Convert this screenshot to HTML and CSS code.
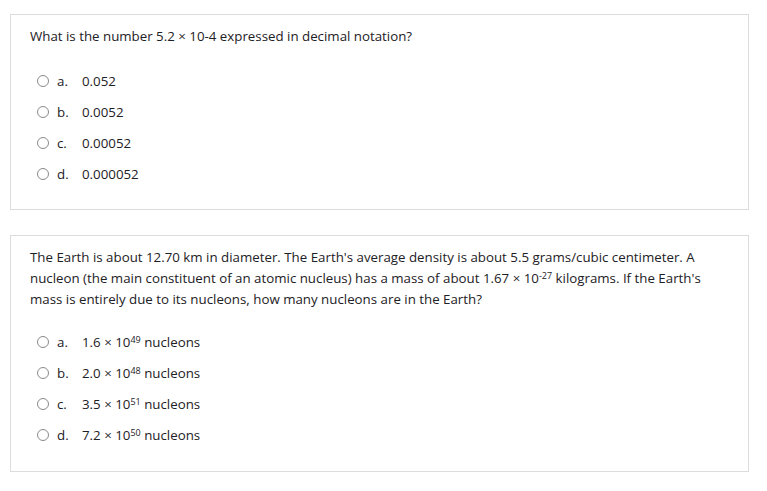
FILE: index.html
```html
<!DOCTYPE html>
<html lang="en">
<head>
<meta charset="utf-8">
<title>Quiz</title>
<link rel="stylesheet" href="styles.css">
</head>
<body>
<div class="page">
  <div class="card">
    <p class="qtext">What is the number 5.2 × 10-4 expressed in decimal notation?</p>
    <div class="answers">
      <label class="opt"><span class="radio"></span><span class="letter">a.</span><span class="val">0.052</span></label>
      <label class="opt"><span class="radio"></span><span class="letter">b.</span><span class="val">0.0052</span></label>
      <label class="opt"><span class="radio"></span><span class="letter">c.</span><span class="val">0.00052</span></label>
      <label class="opt"><span class="radio"></span><span class="letter">d.</span><span class="val">0.000052</span></label>
    </div>
  </div>
  <div class="card card2">
    <p class="qtext">The Earth is about 12.70 km in diameter. The Earth's average density is about 5.5 grams/cubic centimeter. A nucleon (the main constituent of an atomic nucleus) has a mass of about 1.67 × 10<sup>-27</sup> kilograms. If the Earth's mass is entirely due to its nucleons, how many nucleons are in the Earth?</p>
    <div class="answers">
      <label class="opt"><span class="radio"></span><span class="letter">a.</span><span class="val">1.6 × 10<sup>49</sup> nucleons</span></label>
      <label class="opt"><span class="radio"></span><span class="letter">b.</span><span class="val">2.0 × 10<sup>48</sup> nucleons</span></label>
      <label class="opt"><span class="radio"></span><span class="letter">c.</span><span class="val">3.5 × 10<sup>51</sup> nucleons</span></label>
      <label class="opt"><span class="radio"></span><span class="letter">d.</span><span class="val">7.2 × 10<sup>50</sup> nucleons</span></label>
    </div>
  </div>
</div>
</body>
</html>
```

FILE: styles.css
```css
html, body {
  margin: 0;
  background: #ffffff;
}
body {
  font-family: "Open Sans", "Noto Sans", "Liberation Sans", sans-serif;
  font-size: 13.3px;
  color: #1d2125;
}
.page {
  padding: 14px 18px 20px 10px;
  display: flex;
  flex-direction: column;
  gap: 25px;
}
.card {
  border: 1px solid #dcdcdc;
  padding: 11px 30px 20px 19px;
}
.card2 {
  padding-bottom: 21px;
}
.qtext {
  margin: 0;
  line-height: 21px;
}
.answers {
  margin-top: 18px;
  display: flex;
  flex-direction: column;
}
.card2 .answers {
  margin-top: 17px;
}
.opt {
  display: flex;
  align-items: center;
  height: 31px;
}
.card2 .opt {
  height: 30.8px;
}
.radio {
  width: 10px;
  height: 10px;
  border: 1px solid #8a8a8a;
  border-radius: 50%;
  margin-left: 7px;
  margin-right: 8px;
  flex: none;
}
.letter {
  width: 25px;
  flex: none;
}
sup {
  font-size: 9px;
  line-height: 0;
  vertical-align: 4px;
}
```
